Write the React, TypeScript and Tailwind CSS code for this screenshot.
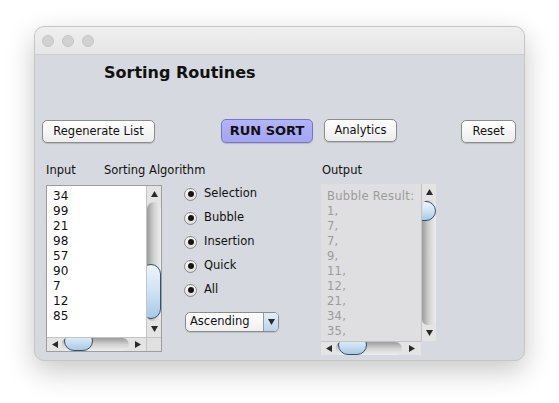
import React from 'react';

const font = { fontFamily: '"DejaVu Sans", "Liberation Sans", sans-serif' };

function Arrow({ dir }: { dir: 'up' | 'down' | 'left' | 'right' }) {
  const pts = {
    up: '0,6 3.5,0 7,6',
    down: '0,0 3.5,6 7,0',
    left: '6,0 0,3.5 6,7',
    right: '0,0 6,3.5 0,7',
  }[dir];
  const vertical = dir === 'up' || dir === 'down';
  return (
    <svg width={vertical ? 7 : 6} height={vertical ? 6 : 7} viewBox={vertical ? '0 0 7 6' : '0 0 6 7'}>
      <polygon points={pts} fill="#2a2a2a" />
    </svg>
  );
}

function Thumb({ className }: { className: string }) {
  return (
    <div
      className={`absolute rounded-full border border-[#34506b] bg-gradient-to-b from-[#eef5fc] via-[#cfe2f4] to-[#a9c9e6] ${className}`}
    />
  );
}

function VScroll({ height, trackH, thumb }: { height: number; trackH: number; thumb: string }) {
  return (
    <div className="flex w-[15px] flex-col border-l border-[#c4c4c4] bg-[#e4e4e4]" style={{ height }}>
      <div className="flex h-[16px] items-center justify-center">
        <Arrow dir="up" />
      </div>
      <div
        className="relative overflow-hidden rounded-t-[10px] rounded-b-[8px] bg-gradient-to-r from-[#9c9c9c] via-[#d2d2d2] to-[#eeeeee]"
        style={{ height: trackH }}
      >
        <Thumb className={thumb} />
      </div>
      <div className="flex flex-1 items-center justify-center">
        <Arrow dir="down" />
      </div>
    </div>
  );
}

function HScroll({ width, trackW, thumb }: { width: number; trackW: number; thumb: string }) {
  return (
    <div className="flex h-[14px] items-stretch border-t border-[#c4c4c4] bg-[#e4e4e4]" style={{ width }}>
      <div className="flex w-[15px] items-center justify-center">
        <Arrow dir="left" />
      </div>
      <div
        className="relative overflow-hidden rounded-l-[8px] rounded-r-[10px] bg-gradient-to-b from-[#9c9c9c] via-[#d2d2d2] to-[#eeeeee]"
        style={{ width: trackW }}
      >
        <Thumb className={thumb} />
      </div>
      <div className="flex flex-1 items-center justify-center">
        <Arrow dir="right" />
      </div>
    </div>
  );
}

function Button({ label, className = '', primary = false }: { label: string; className?: string; primary?: boolean }) {
  return (
    <div
      className={`flex items-center justify-center rounded-[5px] border shadow-[0_1px_1px_rgba(0,0,0,0.15)] ${
        primary
          ? 'border-[#7777bd] bg-gradient-to-b from-[#b3b4fa] to-[#a3a4f3] text-[13px] font-bold text-[#111]'
          : 'border-[#8c8c8c] bg-gradient-to-b from-white to-[#ededed] text-[11.5px] text-[#111]'
      } ${className}`}
    >
      {label}
    </div>
  );
}

function Radio({ label }: { label: string }) {
  return (
    <div className="flex h-[14px] items-center">
      <div className="flex h-[13px] w-[13px] items-center justify-center rounded-full border border-[#8a8a8a] bg-gradient-to-b from-white to-[#dcdcdc]">
        <div className="h-[6px] w-[6px] rounded-full bg-[#151515]" />
      </div>
      <span className="ml-[7px] text-[11.5px] text-[#111]">{label}</span>
    </div>
  );
}

export default function App() {
  const input = ['34', '99', '21', '98', '57', '90', '7', '12', '85'];
  const output = ['Bubble Result:', '1,', '7,', '7,', '9,', '11,', '12,', '21,', '34,', '35,'];

  return (
    <div className="h-[403px] w-[559px] bg-white pl-[34px] pt-[26px]" style={font}>
      <div className="flex h-[335px] w-[491px] flex-col overflow-hidden rounded-[10px] border border-[#c6c6c6] bg-[#d6d9df] shadow-[0_10px_28px_rgba(0,0,0,0.22)]">
        {/* title bar */}
        <div className="flex h-[28px] items-center gap-[8px] border-b border-[#cfcfcf] bg-gradient-to-b from-[#efefef] to-[#e6e6e6] pl-[7px]">
          <div className="h-[12px] w-[12px] rounded-full border border-[#c4c4c4] bg-[#d2d2d2]" />
          <div className="h-[12px] w-[12px] rounded-full border border-[#c4c4c4] bg-[#d2d2d2]" />
          <div className="h-[12px] w-[12px] rounded-full border border-[#c4c4c4] bg-[#d2d2d2]" />
        </div>

        {/* heading */}
        <div className="ml-[69px] mt-[8px] h-[20px] text-[16px] font-bold leading-[20px] text-[#111]">Sorting Routines</div>

        {/* buttons */}
        <div className="mt-[36px] flex items-start">
          <Button label="Regenerate List" className="ml-[7px] mt-[1px] h-[23px] w-[113px]" />
          <Button label="RUN SORT" primary className="ml-[66px] h-[24px] w-[92px]" />
          <Button label="Analytics" className="ml-[11px] h-[23px] w-[73px]" />
          <Button label="Reset" className="ml-[64px] mt-[1px] h-[23px] w-[55px]" />
        </div>

        {/* labels */}
        <div className="mt-[20px] flex h-[14px] items-center text-[11.5px] leading-[14px] text-[#111]">
          <span className="ml-[11px] w-[58px]">Input</span>
          <span className="w-[218px]">Sorting Algorithm</span>
          <span>Output</span>
        </div>

        {/* panels */}
        <div className="mt-[7px] flex items-start">
          {/* input list */}
          <div className="ml-[11px] mt-[1px] flex w-[116px] flex-col border border-[#9e9e9e]">
            <div className="flex">
              <div className="h-[151px] w-[99px] bg-white pl-[6px] pt-[3px] text-[12px] leading-[15px] text-[#111]">
                {input.map((v, i) => (
                  <div key={i}>{v}</div>
                ))}
              </div>
              <VScroll height={151} trackH={119} thumb="-left-[6px] top-[62px] h-[55px] w-[20px]" />
            </div>
            <div className="flex">
              <HScroll width={99} trackW={67} thumb="left-[2px] -top-[7px] h-[20px] w-[29px]" />
              <div className="h-[14px] flex-1 border-l border-t border-[#c4c4c4] bg-[#e0e0e0]" />
            </div>
          </div>

          {/* algorithm */}
          <div className="ml-[22px] mt-[3px] flex w-[94px] flex-col">
            <div className="flex flex-col gap-[10px]">
              <Radio label="Selection" />
              <Radio label="Bubble" />
              <Radio label="Insertion" />
              <Radio label="Quick" />
              <Radio label="All" />
            </div>
            <div className="ml-[1px] mt-[15px] flex h-[20px] w-[94px] overflow-hidden rounded-[5px] border border-[#8c8c8c] bg-gradient-to-b from-white to-[#efefef] shadow-[0_1px_1px_rgba(0,0,0,0.12)]">
              <div className="flex flex-1 items-center pl-[4px] text-[11.5px] text-[#111]">Ascending</div>
              <div className="flex w-[15px] items-center justify-center border-l border-[#9a9a9a] bg-gradient-to-b from-[#e4eef8] to-[#bcd3ea]">
                <Arrow dir="down" />
              </div>
            </div>
          </div>

          {/* output */}
          <div className="ml-[43px] flex flex-col">
            <div className="flex">
              <div className="h-[157px] w-[100px] overflow-hidden bg-[#dfdfe1] pl-[6px] pt-[5px] text-[11.5px] leading-[15px] tracking-[0.3px] text-[#9b9b9b]">
                {output.map((v, i) => (
                  <div key={i}>{v}</div>
                ))}
              </div>
              <VScroll height={157} trackH={125} thumb="-left-[12px] top-[1px] h-[20px] w-[26px]" />
            </div>
            <HScroll width={100} trackW={66} thumb="left-[2px] -top-[7px] h-[20px] w-[29px]" />
          </div>
        </div>
      </div>
    </div>
  );
}
